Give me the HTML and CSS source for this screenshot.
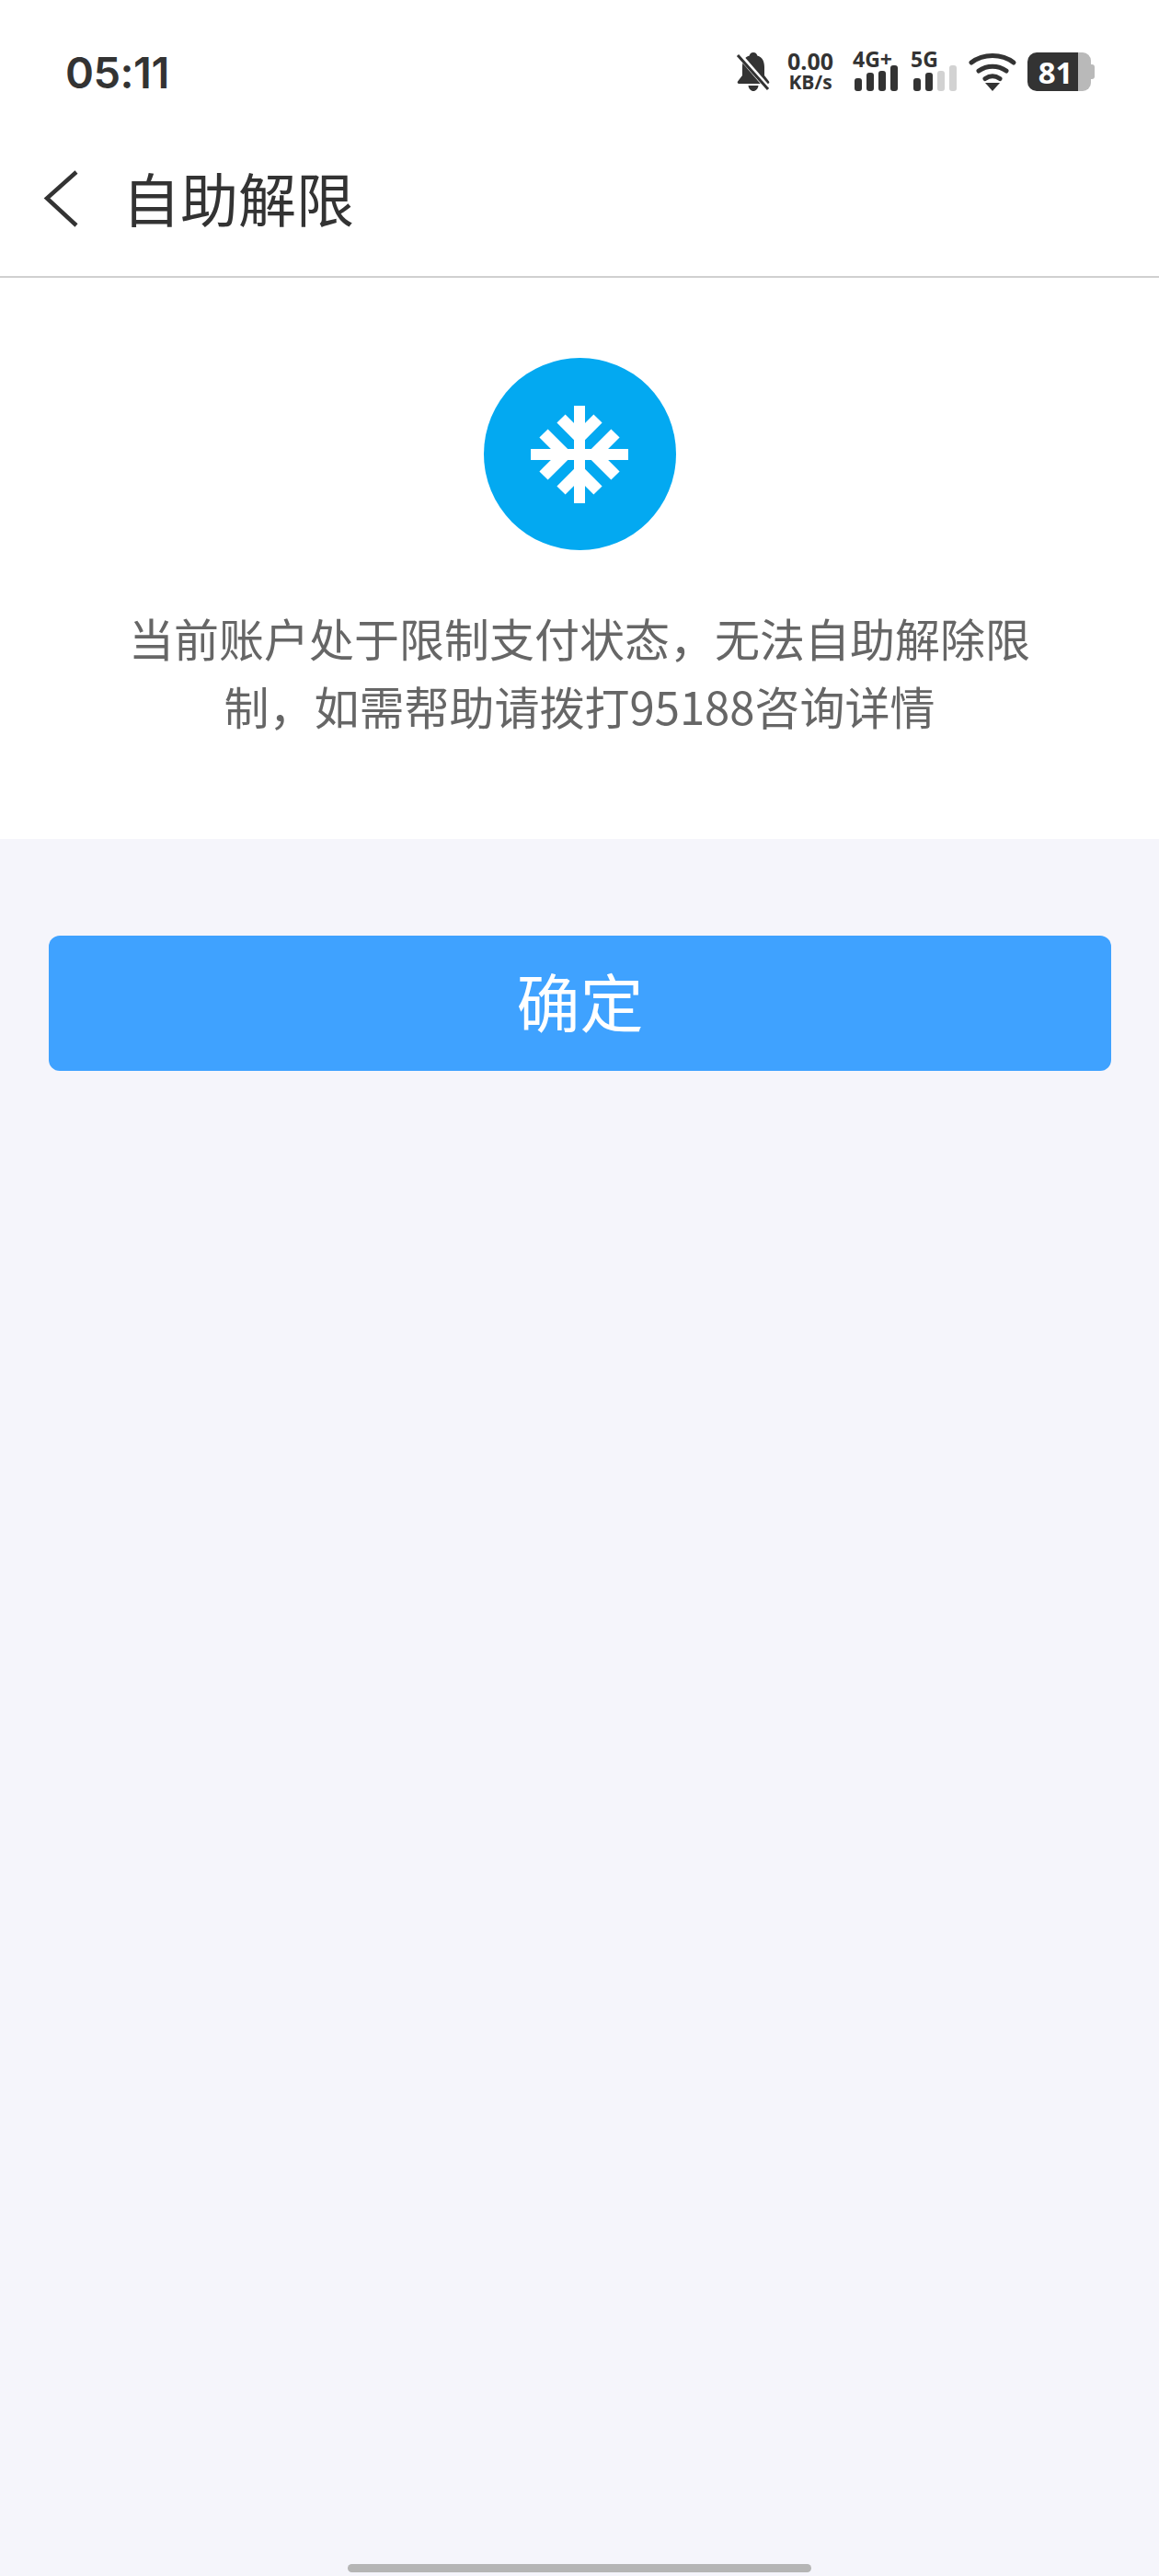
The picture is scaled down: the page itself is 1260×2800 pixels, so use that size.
FILE: index.html
```html
<!DOCTYPE html>
<html lang="zh-CN">
<head>
<meta charset="utf-8">
<title>自助解限</title>
<link rel="stylesheet" href="styles.css">
</head>
<body>
<div class="page">
  <header class="status">
    <span class="time">05:11</span>
    <div class="icons">
      <svg class="bell" width="36" height="42" viewBox="0 0 36 42">
        <path d="M18 0c2.500 0 4 1.600 4.300 3.600C28 5.200 30 10 30 16v9l5 6.500c.8 1.200 0 2.500-1.500 2.500H2.500C1 34 .2 32.700 1 31.500L6 25v-9c0-6 2-10.800 7.700-12.400C14 1.600 15.500 0 18 0z" fill="#333"/>
        <path d="M12.500 36h11c-.5 3.500-2.800 6-5.500 6s-5-2.500-5.500-6z" fill="#333"/>
        <path d="M2 2l32 37" stroke="#fff" stroke-width="6"/>
        <path d="M1 3l33 37" stroke="#333" stroke-width="3"/>
      </svg>
      <div class="speed">0.00<br>KB/s</div>
      <svg class="sig-4g" width="50" height="42" viewBox="0 0 50 42">
        <text class="sig-label" x="0" y="16">4G+</text>
        <rect x="2" y="28" width="8" height="14" rx="3" fill="#333"/>
        <rect x="15" y="22" width="8" height="20" rx="3" fill="#333"/>
        <rect x="28" y="20" width="8" height="22" rx="3" fill="#333"/>
        <rect x="41" y="14" width="8" height="28" rx="3" fill="#333"/>
      </svg>
      <svg class="sig-5g" width="50" height="42" viewBox="0 0 50 42">
        <text class="sig-label" x="0" y="16">5G</text>
        <rect x="3" y="28" width="8" height="14" rx="3" fill="#333"/>
        <rect x="16" y="22" width="8" height="20" rx="3" fill="#333"/>
        <rect x="29" y="20" width="8" height="22" rx="3" fill="#d2d2d2"/>
        <rect x="42" y="14" width="8" height="28" rx="3" fill="#d2d2d2"/>
      </svg>
      <svg class="wifi" width="52" height="42" viewBox="0 0 52 42">
        <path d="M3 11C16 1 36 1 49 11" fill="none" stroke="#333" stroke-width="5" stroke-linecap="round"/>
        <path d="M11 20c9-6.500 21-6.500 30 0" fill="none" stroke="#333" stroke-width="5" stroke-linecap="round"/>
        <path d="M18 28.500c5-3.500 11-3.500 16 0" fill="none" stroke="#333" stroke-width="5" stroke-linecap="round"/>
        <path d="M18 33h16l-8 9z" fill="#333"/>
      </svg>
      <div class="battery">
        <div class="bat-level"><span class="bat-num">81</span></div>
        <div class="bat-rest"></div>
        <div class="bat-nub"></div>
      </div>
    </div>
  </header>

  <nav class="nav">
    <svg class="back" width="38" height="62" viewBox="0 0 38 62">
      <path d="M36 2L4 30.500 36 60" fill="none" stroke="#333" stroke-width="4.500"/>
    </svg>
    <h1 class="title">自助解限</h1>
  </nav>

  <section class="panel">
    <div class="circle">
      <svg width="116" height="116" viewBox="-58 -58 116 116">
        <path d="M0 -53V53M-53 0H53" fill="none" stroke="#fff" stroke-width="12"/>
        <g fill="none" stroke="#fff" stroke-width="13">
          <path d="M-20 -39L0 -19 20 -39"/>
          <path d="M-20 39L0 19 20 39"/>
          <path d="M-39 -23L-16 0 -39 23"/>
          <path d="M39 -23L16 0 39 23"/>
        </g>
      </svg>
    </div>
    <p class="message">当前账户处于限制支付状态，无法自助解除限制，如需帮助请拨打95188咨询详情</p>
  </section>

  <main class="actions">
    <button class="confirm" type="button">确定</button>
  </main>

  <div class="home-bar"></div>
</div>
</body>
</html>
```
FILE: styles.css
```css
* { box-sizing: border-box; }
html, body { margin: 0; padding: 0; }
body {
  width: 1260px;
  height: 2800px;
  background: #f5f5fb;
  font-family: "Noto Sans CJK SC", "Noto Sans", sans-serif;
  overflow: hidden;
}
.page {
  display: flex;
  flex-direction: column;
  height: 2800px;
}
.status {
  height: 132px;
  padding: 24px 70px 0 71px;
  background: #fff;
  display: flex;
  align-items: center;
  justify-content: space-between;
}
.time {
  font-family: Inter, Roboto, sans-serif;
  font-size: 47px;
  font-weight: 600;
  letter-spacing: -0.5px;
  color: #333;
  line-height: 1;
}
.icons {
  display: flex;
  align-items: center;
  height: 42px;
}
.icons svg { display: block; overflow: visible; }
.bell { margin-right: 17px; }
.speed {
  width: 54px;
  margin-right: 19px;
  text-align: center;
  color: #333;
  font-family: "Open Sans", "Noto Sans", sans-serif;
  font-weight: 700;
  font-size: 21px;
  line-height: 23px;
}
.speed::first-line { font-size: 25px; }
.sig-label {
  font-family: "Open Sans", "Noto Sans", sans-serif;
  font-weight: 700;
  font-size: 23px;
  fill: #333;
}
.sig-4g { margin-right: 13px; }
.sig-5g { margin-right: 13px; }
.wifi { margin-right: 12px; }
.battery {
  width: 73px;
  height: 42px;
  display: flex;
  align-items: center;
}
.bat-level {
  width: 55px;
  height: 42px;
  background: #333;
  border-radius: 10px 0 0 10px;
  display: flex;
  align-items: center;
  justify-content: center;
}
.bat-num {
  color: #fff;
  font-family: "Open Sans", "Noto Sans", sans-serif;
  font-weight: 700;
  font-size: 33px;
  line-height: 1;
  padding-left: 6px;
}
.bat-rest {
  width: 14px;
  height: 42px;
  background: #b9b9b9;
  border-radius: 0 9px 9px 0;
}
.bat-nub {
  width: 4px;
  height: 16px;
  background: #b9b9b9;
  border-radius: 0 3px 3px 0;
}
.nav {
  height: 170px;
  padding: 0 0 0 47px;
  background: #fff;
  border-bottom: 2px solid #d0d0d0;
  display: flex;
  align-items: center;
}
.back { display: block; }
.title {
  margin: 0 0 6px 48px;
  font-size: 63px;
  font-weight: 400;
  line-height: 1;
  color: #333;
}
.panel {
  height: 610px;
  background: #fff;
  padding-top: 87px;
  display: flex;
  flex-direction: column;
  align-items: center;
}
.circle {
  width: 209px;
  height: 209px;
  border-radius: 50%;
  background: #03a9f1;
  display: flex;
  align-items: center;
  justify-content: center;
}
.circle svg { display: block; }
.message {
  margin: 58px 0 0;
  width: 990px;
  font-size: 49px;
  line-height: 74px;
  text-align: center;
  color: #666;
}
.actions {
  padding: 105px 52px 0 53px;
  flex: 1;
}
.confirm {
  display: block;
  width: 100%;
  height: 147px;
  padding: 0 0 6px;
  border: 0;
  border-radius: 12px;
  background: #3fa2ff;
  color: #fff;
  font-family: inherit;
  font-size: 69px;
  line-height: 1;
}
.home-bar {
  width: 504px;
  height: 9px;
  margin: 0 auto 4px;
  border-radius: 5px;
  background: #b5b5b5;
}
```
